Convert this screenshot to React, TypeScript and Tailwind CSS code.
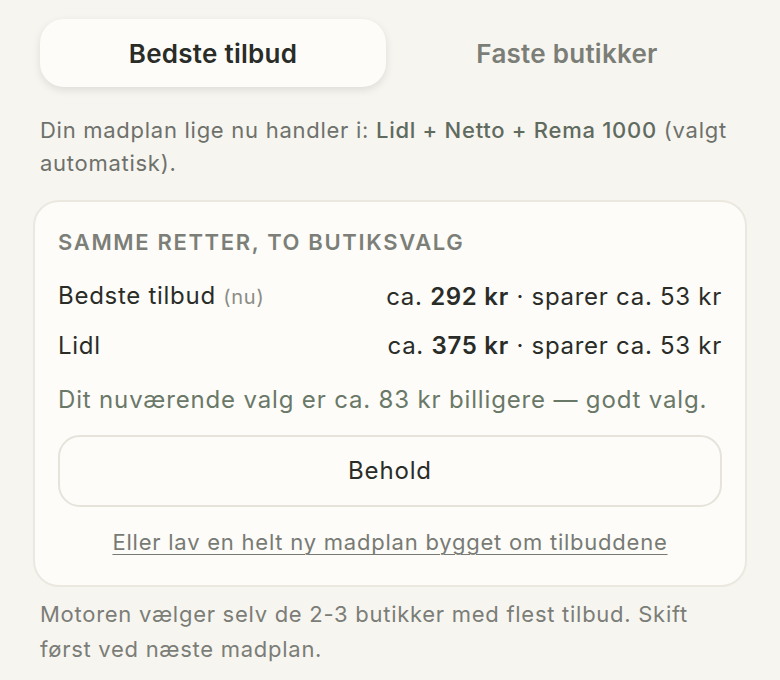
import React, { useState } from 'react';

export default function App() {
  const [tab, setTab] = useState<'best' | 'fixed'>('best');

  const tabClass = (active: boolean) =>
    active
      ? 'h-[68px] rounded-[24px] bg-[#fdfcf8] text-[26px] font-semibold tracking-[0.01em] text-[#2a2c28] shadow-[0_3px_8px_rgba(0,0,0,0.10)]'
      : 'h-[68px] rounded-[24px] text-[26px] font-semibold tracking-[0.01em] text-[#7b7e77]';

  return (
    <div
      className="min-h-screen bg-[#f7f5f0] px-[40px] pt-[19px] text-[#2a2c28]"
      style={{ fontFamily: 'Inter, "Noto Sans", sans-serif' }}
    >
      <div className="grid grid-cols-2 gap-[8px]">
        <button onClick={() => setTab('best')} className={tabClass(tab === 'best')}>
          Bedste tilbud
        </button>
        <button onClick={() => setTab('fixed')} className={tabClass(tab === 'fixed')}>
          Faste butikker
        </button>
      </div>

      <p className="mt-[27px] text-[22px] leading-[33px] tracking-[0.033em] text-[#6e716b]">
        Din madplan lige nu handler i: <span className="font-medium text-[#5f6b5e]">Lidl + Netto + Rema 1000</span>{' '}
        (valgt automatisk).
      </p>

      <div className="-mx-[7px] mt-[20px] rounded-[26px] border-2 border-[#ebe8e0] bg-[#fdfcf9] px-[23px] pb-[26px] pt-[26px]">
        <div className="text-[22px] font-semibold uppercase leading-[28px] tracking-[0.075em] text-[#7c7f78]">
          Samme retter, to butiksvalg
        </div>

        <div className="mt-[24px] flex items-center justify-between text-[24px] leading-[32px] tracking-[0.03em]">
          <span>
            Bedste tilbud <span className="text-[20px] text-[#8a8c86]">(nu)</span>
          </span>
          <span>
            ca. <b className="font-semibold">292 kr</b> · sparer ca. 53 kr
          </span>
        </div>
        <div className="mt-[17px] flex items-center justify-between text-[24px] leading-[32px] tracking-[0.03em]">
          <span>Lidl</span>
          <span>
            ca. <b className="font-semibold">375 kr</b> · sparer ca. 53 kr
          </span>
        </div>

        <p className="mt-[22px] text-[24px] leading-[32px] tracking-[0.035em] text-[#6a7868]">
          Dit nuværende valg er ca. 83 kr billigere — godt valg.
        </p>

        <button className="mt-[19px] h-[72px] w-full rounded-[22px] border-2 border-[#e6e3db] bg-[#fdfcf9] text-[24px] tracking-[0.035em] text-[#2a2c28]">
          Behold
        </button>

        <div className="mt-[20px] text-center leading-[30px]">
          <a
            href="#"
            className="text-[22px] tracking-[0.035em] text-[#787a74] underline decoration-1 underline-offset-[4px]"
          >
            Eller lav en helt ny madplan bygget om tilbuddene
          </a>
        </div>
      </div>

      <p className="mt-[10px] text-[22px] leading-[35px] tracking-[0.033em] text-[#7b7d77]">
        Motoren vælger selv de 2-3 butikker med flest tilbud. Skift først ved næste madplan.
      </p>
    </div>
  );
}
